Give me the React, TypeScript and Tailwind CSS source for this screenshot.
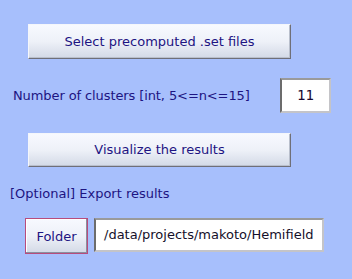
export default function App() {
  const btn =
    "flex items-center justify-center bg-gradient-to-b from-[#f7f9ff] via-[#eef1f8] to-[#d3d9e6] border border-t-[#f4f6fb] border-l-[#f4f6fb] border-r-[#6f6f78] border-b-[#6f6f78] text-[13px] text-[#1d1482] shadow-[inset_-1px_-1px_0_#b9bfcc]";
  const field =
    "flex items-center bg-white border-2 border-t-[#9a9a9a] border-l-[#6c6c6c] border-r-[#c4c4c8] border-b-[#c4c4c8]";

  return (
    <div
      className="w-[352px] h-[279px] bg-[#a7bffc] flex flex-col pt-[24px]"
      style={{ fontFamily: '"DejaVu Sans", Verdana, sans-serif' }}
    >
      <button className={`${btn} ml-[28px] w-[263px] h-[35px]`}>
        Select precomputed .set files
      </button>

      <div className="flex items-center mt-[19px] h-[35px]">
        <span className="ml-[13px] text-[13px] tracking-[-0.1px] text-[#1d1482]">
          Number of clusters [int, 5&lt;=n&lt;=15]
        </span>
        <div
          className={`${field} ml-auto mr-[21px] w-[51px] h-[35px] justify-center text-[14px] text-[#1a0830]`}
          style={{ fontFamily: '"DejaVu Sans Mono", monospace' }}
        >
          11
        </div>
      </div>

      <button className={`${btn} ml-[28px] mt-[20px] w-[263px] h-[34px]`}>
        Visualize the results
      </button>

      <div className="ml-[10px] mt-[19px] h-[16px] leading-[16px] text-[13px] text-[#1d1482]">
        [Optional] Export results
      </div>

      <div className="flex items-start ml-[25px] mt-[16px]">
        <button
          className="flex items-center justify-center w-[63px] h-[36px] pt-[2px] bg-gradient-to-b from-[#f7f9ff] via-[#eef1f8] to-[#d3d9e6] border border-[#b84c7c] shadow-[inset_-1px_-1px_0_#8a8fa0,inset_1px_1px_0_#ffffff] text-[13px] text-[#1d1482]"
        >
          Folder
        </button>
        <div
          className={`${field} ml-[6px] w-[230px] h-[34px] pl-[8px] text-[13px] text-[#15102a]`}
        >
          /data/projects/makoto/Hemifield
        </div>
      </div>
    </div>
  );
}
